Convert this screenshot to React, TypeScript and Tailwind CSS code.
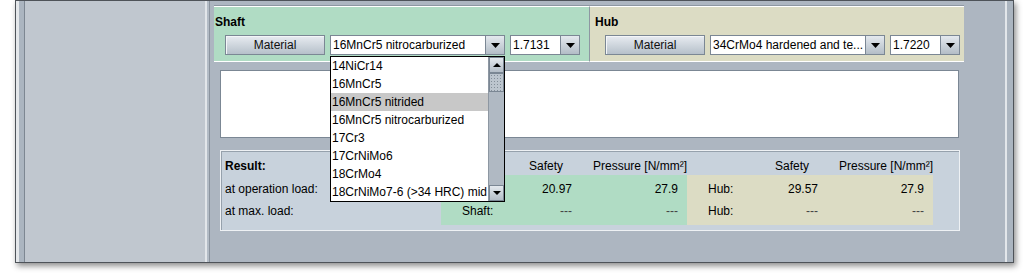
import React from 'react';

const shaftList = [
  '14NiCr14',
  '16MnCr5',
  '16MnCr5 nitrided',
  '16MnCr5 nitrocarburized',
  '17Cr3',
  '17CrNiMo6',
  '18CrMo4',
  '18CrNiMo7-6 (>34 HRC) mid',
];

function Tri({ up = false, w = 9, h = 5 }: { up?: boolean; w?: number; h?: number }) {
  return (
    <svg width={w} height={h} viewBox={`0 0 ${w} ${h}`}>
      <polygon points={up ? `0,${h} ${w},${h} ${w / 2},0` : `0,0 ${w},0 ${w / 2},${h}`} fill="#000" />
    </svg>
  );
}

function MaterialButton() {
  return (
    <div className="w-[100px] h-[20px] shrink-0 border border-[#7b8794] bg-linear-to-b from-[#e8ecf1] to-[#b6c0ca] shadow-[inset_1px_1px_0_#f4f6f8] flex items-center justify-center text-[#111]">
      Material
    </div>
  );
}

function Combo({ value, width, children }: { value: string; width: string; children?: React.ReactNode }) {
  return (
    <div className={`relative h-[20px] shrink-0 flex border border-[#7b8794] bg-white ${width}`}>
      <div className="flex-1 min-w-0 pl-[2px] leading-[18px] whitespace-nowrap overflow-hidden">{value}</div>
      <div className="w-[19px] border-l border-[#7b8794] bg-linear-to-b from-[#e4e9ee] to-[#b3bdc7] flex items-center justify-center">
        <Tri />
      </div>
      {children}
    </div>
  );
}

function ScrollBtn({ up }: { up?: boolean }) {
  return (
    <div className="h-[16px] border border-[#7b8794] bg-linear-to-b from-[#e4e9ee] to-[#b3bdc7] flex items-center justify-center">
      <Tri up={up} w={8} h={4} />
    </div>
  );
}

function Popup() {
  return (
    <div className="absolute left-[-1px] top-[20px] w-[175px] h-[146px] border border-black bg-white flex z-10">
      <div className="flex-1 min-w-0 overflow-hidden">
        {shaftList.map((item, i) => (
          <div
            key={item}
            className={`h-[18px] leading-[18px] pl-[1px] whitespace-nowrap ${i === 2 ? 'bg-[#c8c8c8]' : ''}`}
          >
            {item}
          </div>
        ))}
      </div>
      <div className="w-[16px] flex flex-col bg-[#b0b9c3] border-l border-[#8d97a2]">
        <ScrollBtn up />
        <div className="h-[19px] border border-[#7b8794] bg-[#bcc5ce] bg-[radial-gradient(#838e99_0.8px,transparent_0.9px)] bg-[length:3px_3px]" />
        <div className="flex-1" />
        <ScrollBtn />
      </div>
    </div>
  );
}

function ValueBlock({ label, rows, bg }: { label: string; rows: [string, string][]; bg: string }) {
  return (
    <div className={`w-[246px] shrink-0 py-[3px] ${bg}`}>
      {rows.map(([s, p], i) => (
        <div key={i} className="h-[22px] leading-[22px] flex pl-[21px]">
          <span className="w-[50px]">{label}</span>
          <span className={`w-[60px] text-right ${s === '---' ? 'text-[#444]' : ''}`}>{s}</span>
          <span className={`w-[106px] text-right ${p === '---' ? 'text-[#444]' : ''}`}>{p}</span>
        </div>
      ))}
    </div>
  );
}

function HeaderBlock() {
  return (
    <div className="w-[246px] shrink-0 flex pl-[88px] whitespace-nowrap">
      <span className="w-[68px]">Safety</span>
      <span>Pressure [N/mm²]</span>
    </div>
  );
}

export default function App() {
  return (
    <div className="w-[1030px] h-[278px] bg-white font-['Liberation_Sans',Arial,sans-serif] text-[12px] text-black overflow-hidden">
      <div className="ml-[15px] w-[999px] h-[263px] border border-[#4e5359] flex shadow-[2px_3px_6px_rgba(0,0,0,0.45)]">
        <div className="w-[3px] bg-[#e4e7ea]" />
        <div className="w-[5px] bg-[#abb5c0]" />
        <div className="w-[1px] bg-[#7d8792]" />
        <div className="w-[180px] bg-[#c0c7cf]" />
        <div className="w-[2px] bg-[#e2e6ea]" />
        <div className="w-[2px] bg-[#b3bcc6]" />
        <div className="w-[1px] bg-[#8a939e]" />

        <div className="w-[795px] bg-[#adb6c1] pl-[4px] pt-[4px]">
          <div className="w-[750px] flex border-t border-[#8d97a2]">
            <div className="w-[376px] bg-[#b0dcc4] border-t border-b border-white border-r border-r-[#8d97a2]">
              <div className="pl-[1px] pt-[8px] h-[28px] leading-[14px] font-bold">Shaft</div>
              <div className="flex gap-[5px] pl-[11px] pb-[6px]">
                <MaterialButton />
                <Combo value="16MnCr5 nitrocarburized" width="w-[175px]">
                  <Popup />
                </Combo>
                <Combo value="1.7131" width="w-[70px]" />
              </div>
            </div>
            <div className="w-[374px] bg-[#dcdcc4] border-t border-b border-white">
              <div className="pl-[5px] pt-[8px] h-[28px] leading-[14px] font-bold">Hub</div>
              <div className="flex gap-[5px] pl-[15px] pb-[6px]">
                <MaterialButton />
                <Combo value="34CrMo4 hardened and te..." width="w-[175px]" />
                <Combo value="1.7220" width="w-[70px]" />
              </div>
            </div>
          </div>

          <div className="ml-[6px] mt-[8px] w-[739px] h-[68px] bg-white border border-[#7b8794]" />

          <div className="ml-[6px] mt-[12px] w-[740px] h-[81px] bg-[#c8d2dc] border border-[#eef1f4] shadow-[inset_1px_1px_0_#96a1ac] pt-[6px]">
            <div className="flex h-[18px] leading-[18px]">
              <div className="w-[220px] shrink-0 pl-[4px] font-bold">Result:</div>
              <HeaderBlock />
              <HeaderBlock />
            </div>
            <div className="flex">
              <div className="w-[220px] shrink-0 pl-[4px] py-[3px]">
                <div className="h-[22px] leading-[22px]">at operation load:</div>
                <div className="h-[22px] leading-[22px]">at max. load:</div>
              </div>
              <ValueBlock label="Shaft:" bg="bg-[#b0dcc4]" rows={[['20.97', '27.9'], ['---', '---']]} />
              <ValueBlock label="Hub:" bg="bg-[#dcdcc4]" rows={[['29.57', '27.9'], ['---', '---']]} />
            </div>
          </div>
        </div>

        <div className="w-[2px] bg-[#e2e6ea]" />
        <div className="w-[6px] bg-[#abb5c0]" />
      </div>
    </div>
  );
}
